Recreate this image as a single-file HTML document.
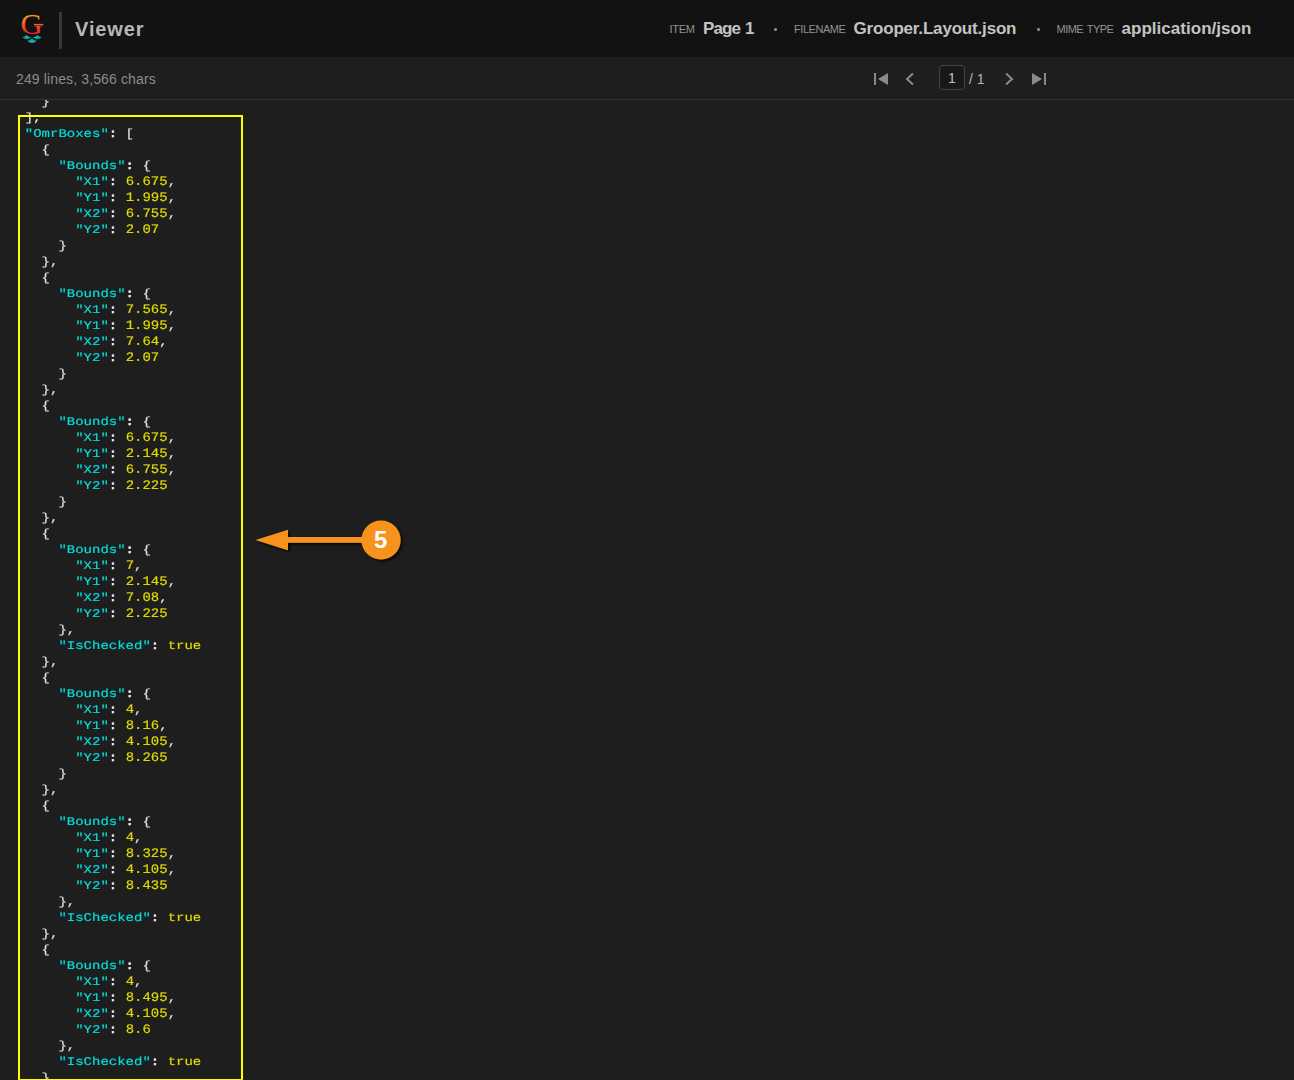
<!DOCTYPE html>
<html lang="en">
<head>
<meta charset="utf-8">
<title>Viewer</title>
<style>
*{box-sizing:border-box;margin:0;padding:0}
html,body{width:1294px;height:1080px;overflow:hidden;background:#1e1e1e}
body{position:relative;font-family:"Liberation Sans","DejaVu Sans",sans-serif;color:#c8c8c8}
#hdr{position:absolute;left:0;top:0;width:1294px;height:57px;background:#121212}
#logo{position:absolute;left:0;top:0}
#div{position:absolute;left:59.3px;top:12px;width:3px;height:37px;background:#383838}
#title{position:absolute;left:75.1px;top:15px;font-size:20px;font-weight:bold;color:#b6b6b6;line-height:28px;letter-spacing:0.85px}
.lbl{position:absolute;top:22px;font-size:11px;color:#929292;line-height:14px;white-space:nowrap}
.val{position:absolute;top:18px;font-size:17px;font-weight:bold;color:#c3c3c3;line-height:22px;white-space:nowrap}
.dot{position:absolute;top:28px;width:2.6px;height:2.6px;border-radius:50%;background:#8a8a8a}
#tb{position:absolute;left:0;top:57px;width:1294px;height:43px;background:#1e1e1e;border-bottom:1px solid #333}
#stats{position:absolute;left:16px;top:13px;letter-spacing:0.13px;font-size:14px;color:#8c8c8c;line-height:18px;white-space:nowrap}
#pgbox{position:absolute;left:939px;top:8px;width:26px;height:25px;border:1px solid #444;border-radius:4px;background:#181818;font-size:14px;color:#c0c0c0;text-align:center;line-height:25.2px}
#pgof{position:absolute;left:969px;top:13px;font-size:14px;color:#b4b4b4;line-height:18px;white-space:nowrap}
.ico{position:absolute;top:1px;left:0}
#codewrap{position:absolute;left:0;top:100px;width:1294px;height:980px;overflow:hidden;background:#1e1e1e}
#code{position:absolute;left:8.2px;top:-6.14px;font-family:"Liberation Mono","DejaVu Sans Mono",monospace;text-rendering:geometricPrecision;font-size:11.8px;line-height:16px;color:#e2e2e2;white-space:pre;font-weight:normal;-webkit-text-stroke:0.15px currentColor;transform:scaleX(1.1864);transform-origin:0 0}
.k{color:#00e0e0}
.n{color:#e0dc00}
.c{color:#f0f0f0;-webkit-text-stroke:0.55px #f0f0f0}
.d{display:inline-block;line-height:16px;height:16px;vertical-align:baseline;transform:scaleY(1.11);transform-origin:0 11.14px}
#ybox{position:absolute;left:18px;top:115px;width:225px;height:966px;border:2px solid #ffff00}
#anno{position:absolute;left:240px;top:500px}
</style>
</head>
<body>
<div id="codewrap"><pre id="code">    }
  ],
  <span class="k">&quot;OmrBoxes&quot;</span><span class="c">:</span> [
    {
      <span class="k">&quot;Bounds&quot;</span><span class="c">:</span> {
        <span class="k">&quot;X1&quot;</span><span class="c">:</span> <span class="n d">6.675</span>,
        <span class="k">&quot;Y1&quot;</span><span class="c">:</span> <span class="n d">1.995</span>,
        <span class="k">&quot;X2&quot;</span><span class="c">:</span> <span class="n d">6.755</span>,
        <span class="k">&quot;Y2&quot;</span><span class="c">:</span> <span class="n d">2.07</span>
      }
    },
    {
      <span class="k">&quot;Bounds&quot;</span><span class="c">:</span> {
        <span class="k">&quot;X1&quot;</span><span class="c">:</span> <span class="n d">7.565</span>,
        <span class="k">&quot;Y1&quot;</span><span class="c">:</span> <span class="n d">1.995</span>,
        <span class="k">&quot;X2&quot;</span><span class="c">:</span> <span class="n d">7.64</span>,
        <span class="k">&quot;Y2&quot;</span><span class="c">:</span> <span class="n d">2.07</span>
      }
    },
    {
      <span class="k">&quot;Bounds&quot;</span><span class="c">:</span> {
        <span class="k">&quot;X1&quot;</span><span class="c">:</span> <span class="n d">6.675</span>,
        <span class="k">&quot;Y1&quot;</span><span class="c">:</span> <span class="n d">2.145</span>,
        <span class="k">&quot;X2&quot;</span><span class="c">:</span> <span class="n d">6.755</span>,
        <span class="k">&quot;Y2&quot;</span><span class="c">:</span> <span class="n d">2.225</span>
      }
    },
    {
      <span class="k">&quot;Bounds&quot;</span><span class="c">:</span> {
        <span class="k">&quot;X1&quot;</span><span class="c">:</span> <span class="n d">7</span>,
        <span class="k">&quot;Y1&quot;</span><span class="c">:</span> <span class="n d">2.145</span>,
        <span class="k">&quot;X2&quot;</span><span class="c">:</span> <span class="n d">7.08</span>,
        <span class="k">&quot;Y2&quot;</span><span class="c">:</span> <span class="n d">2.225</span>
      },
      <span class="k">&quot;IsChecked&quot;</span><span class="c">:</span> <span class="n">true</span>
    },
    {
      <span class="k">&quot;Bounds&quot;</span><span class="c">:</span> {
        <span class="k">&quot;X1&quot;</span><span class="c">:</span> <span class="n d">4</span>,
        <span class="k">&quot;Y1&quot;</span><span class="c">:</span> <span class="n d">8.16</span>,
        <span class="k">&quot;X2&quot;</span><span class="c">:</span> <span class="n d">4.105</span>,
        <span class="k">&quot;Y2&quot;</span><span class="c">:</span> <span class="n d">8.265</span>
      }
    },
    {
      <span class="k">&quot;Bounds&quot;</span><span class="c">:</span> {
        <span class="k">&quot;X1&quot;</span><span class="c">:</span> <span class="n d">4</span>,
        <span class="k">&quot;Y1&quot;</span><span class="c">:</span> <span class="n d">8.325</span>,
        <span class="k">&quot;X2&quot;</span><span class="c">:</span> <span class="n d">4.105</span>,
        <span class="k">&quot;Y2&quot;</span><span class="c">:</span> <span class="n d">8.435</span>
      },
      <span class="k">&quot;IsChecked&quot;</span><span class="c">:</span> <span class="n">true</span>
    },
    {
      <span class="k">&quot;Bounds&quot;</span><span class="c">:</span> {
        <span class="k">&quot;X1&quot;</span><span class="c">:</span> <span class="n d">4</span>,
        <span class="k">&quot;Y1&quot;</span><span class="c">:</span> <span class="n d">8.495</span>,
        <span class="k">&quot;X2&quot;</span><span class="c">:</span> <span class="n d">4.105</span>,
        <span class="k">&quot;Y2&quot;</span><span class="c">:</span> <span class="n d">8.6</span>
      },
      <span class="k">&quot;IsChecked&quot;</span><span class="c">:</span> <span class="n">true</span>
    }</pre></div>
<div id="hdr">
<svg id="logo" width="60" height="57" viewBox="0 0 60 57">
<defs><linearGradient id="gg" gradientUnits="userSpaceOnUse" x1="0" y1="-20" x2="0" y2="0.4"><stop offset="0" stop-color="#f9a51a"/><stop offset="0.45" stop-color="#f26a22"/><stop offset="1" stop-color="#ee1c25"/></linearGradient></defs>
<text transform="translate(20.4 33.6) scale(1.05 1)" x="0" y="0" font-family="Liberation Serif, serif" font-size="29.1" fill="url(#gg)">G</text>
<rect x="34" y="23.9" width="9.3" height="1.3" fill="#f26522"/>
<path d="M22.3 37.3 Q25.4 36.7 26.7 34.9 Q28 36.7 31.1 37.3 Q26.7 40.9 22.3 37.3Z M33 37.3 Q36.1 36.7 37.4 34.9 Q38.7 36.7 41.8 37.3 Q37.4 40.9 33 37.3Z M27.2 41 Q30.7 40.4 32 38.6 Q33.3 40.4 36.8 41 Q32 44.8 27.2 41Z" fill="#00b5ad"/>
</svg>
<div id="div"></div>
<div id="title">Viewer</div>
<div class="lbl" style="left:669.5px;letter-spacing:-0.25px">ITEM</div>
<div class="val" style="left:703px;letter-spacing:-0.9px;word-spacing:1.2px">Page 1</div>
<div class="dot" style="left:774.3px"></div>
<div class="lbl" style="left:794px;letter-spacing:-0.45px">FILENAME</div>
<div class="val" style="left:853.5px;letter-spacing:-0.18px">Grooper.Layout.json</div>
<div class="dot" style="left:1037.3px"></div>
<div class="lbl" style="left:1056.5px;letter-spacing:-0.52px;word-spacing:1.2px">MIME TYPE</div>
<div class="val" style="left:1121.5px;letter-spacing:0.03px">application/json</div>
</div>
<div id="tb">
<div id="stats">249 lines, 3,566 chars</div>
<svg class="ico" width="1294" height="43" viewBox="0 0 1294 43">
<g fill="#8a8a8a" stroke="none">
<rect x="874" y="15" width="2" height="12"/><path d="M888 15 L888 27 L878 21z"/>
<rect x="1044" y="15" width="2" height="12"/><path d="M1032 15 L1032 27 L1042 21z"/>
</g>
<g fill="none" stroke="#8a8a8a" stroke-width="2">
<path d="M913 15.5 L907 21 L913 26.5"/>
<path d="M1006 15.5 L1012 21 L1006 26.5"/>
</g>
</svg>
<div id="pgbox">1</div>
<div id="pgof">/ 1</div>
</div>
<div id="ybox"></div>
<svg id="anno" width="180" height="80" viewBox="0 0 180 80">
<defs><filter id="sh" x="-20%" y="-20%" width="150%" height="150%"><feDropShadow dx="2" dy="2" stdDeviation="1.6" flood-color="#000" flood-opacity="0.75"/></filter></defs>
<g filter="url(#sh)" fill="#f7931e">
<path d="M15.6 40 L48 29.8 L48 37.1 L125 37.1 L125 42.8 L48 42.8 L48 50.2z"/>
<circle cx="141" cy="40" r="19.6"/>
</g>
<text x="140.6" y="48.3" text-anchor="middle" font-family="Liberation Sans, sans-serif" font-weight="bold" font-size="24" fill="#fff">5</text>
</svg>
</body>
</html>
